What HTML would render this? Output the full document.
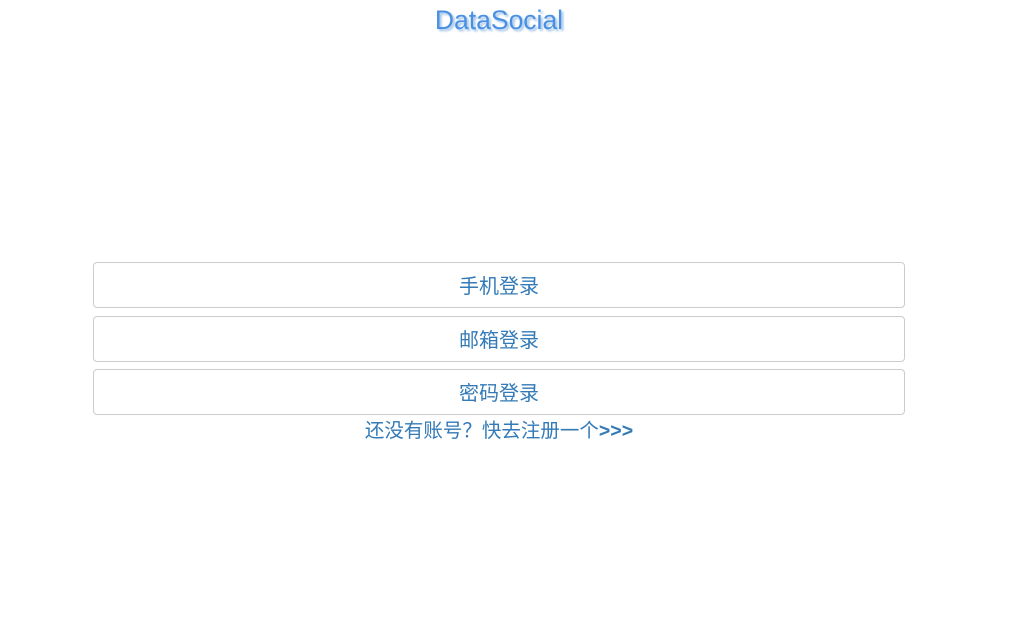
<!DOCTYPE html>
<html><head><meta charset="utf-8"><style>
html,body{margin:0;padding:0;background:#fff;width:1016px;height:635px;overflow:hidden;font-family:"Liberation Sans","Noto Sans CJK SC",sans-serif;}
.title{position:absolute;left:0;width:998px;top:4px;text-align:center;font-size:26.5px;color:#4a90e2;text-shadow:2px 2px 2px #9cc0e8;line-height:32px;}
.btn{position:absolute;left:93px;width:810px;height:44px;border:1px solid #ccc;border-radius:4px;text-align:center;line-height:48px;font-size:20px;color:#337ab7;}
.link{position:absolute;left:0;width:998px;top:417px;text-align:center;font-size:19.5px;color:#337ab7;line-height:28px;}
</style></head><body>
<div class="title">DataSocial</div>
<div class="btn" style="top:262px">手机登录</div>
<div class="btn" style="top:316px">邮箱登录</div>
<div class="btn" style="top:369px">密码登录</div>
<div class="link">还没有账号？快去注册一个<b>&gt;&gt;&gt;</b></div>
</body></html>
